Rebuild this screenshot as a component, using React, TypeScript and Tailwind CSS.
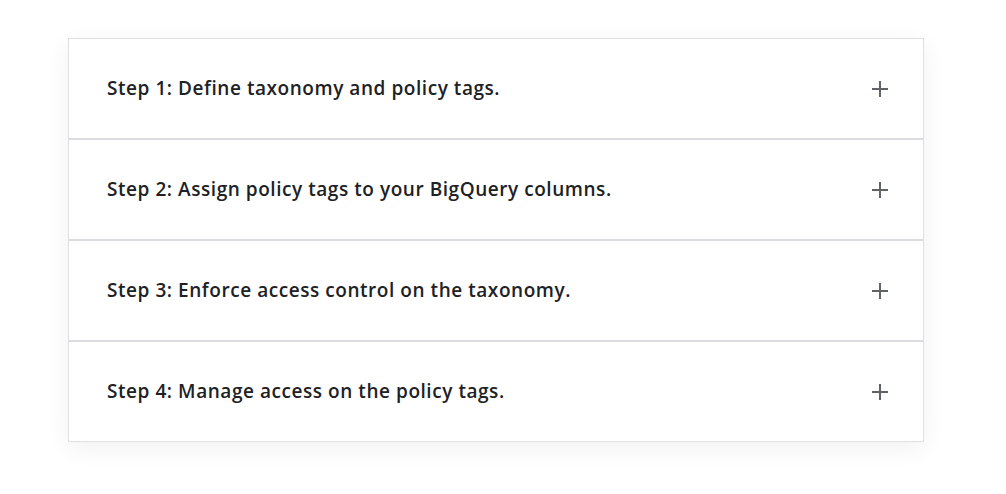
const steps = [
  'Step 1: Define taxonomy and policy tags.',
  'Step 2: Assign policy tags to your BigQuery columns.',
  'Step 3: Enforce access control on the taxonomy.',
  'Step 4: Manage access on the policy tags.',
]

function PlusIcon() {
  return (
    <svg width="18" height="18" viewBox="0 0 18 18" className="text-[#5f6368]">
      <path d="M9 1v16M1 9h16" stroke="currentColor" strokeWidth="2" fill="none" />
    </svg>
  )
}

export default function App() {
  return (
    <div className="min-h-[494px] w-full bg-white pt-[38px] pl-[68px]" style={{ fontFamily: '"Open Sans", "Liberation Sans", sans-serif' }}>
      <div className="w-[856px] border border-[#e0e0e0] bg-white shadow-[0_6px_24px_rgba(0,0,0,0.06)]">
        {steps.map((s, i) => (
          <div
            key={s}
            className={`flex items-center justify-between pl-[38px] pr-[34px] ${i > 0 ? 'h-[101px] border-t-2 border-[#dadce0]' : 'h-[99px]'}`}
          >
            <span className="text-[19px] font-semibold tracking-[0.55px] text-[#202124]">{s}</span>
            <PlusIcon />
          </div>
        ))}
      </div>
    </div>
  )
}
